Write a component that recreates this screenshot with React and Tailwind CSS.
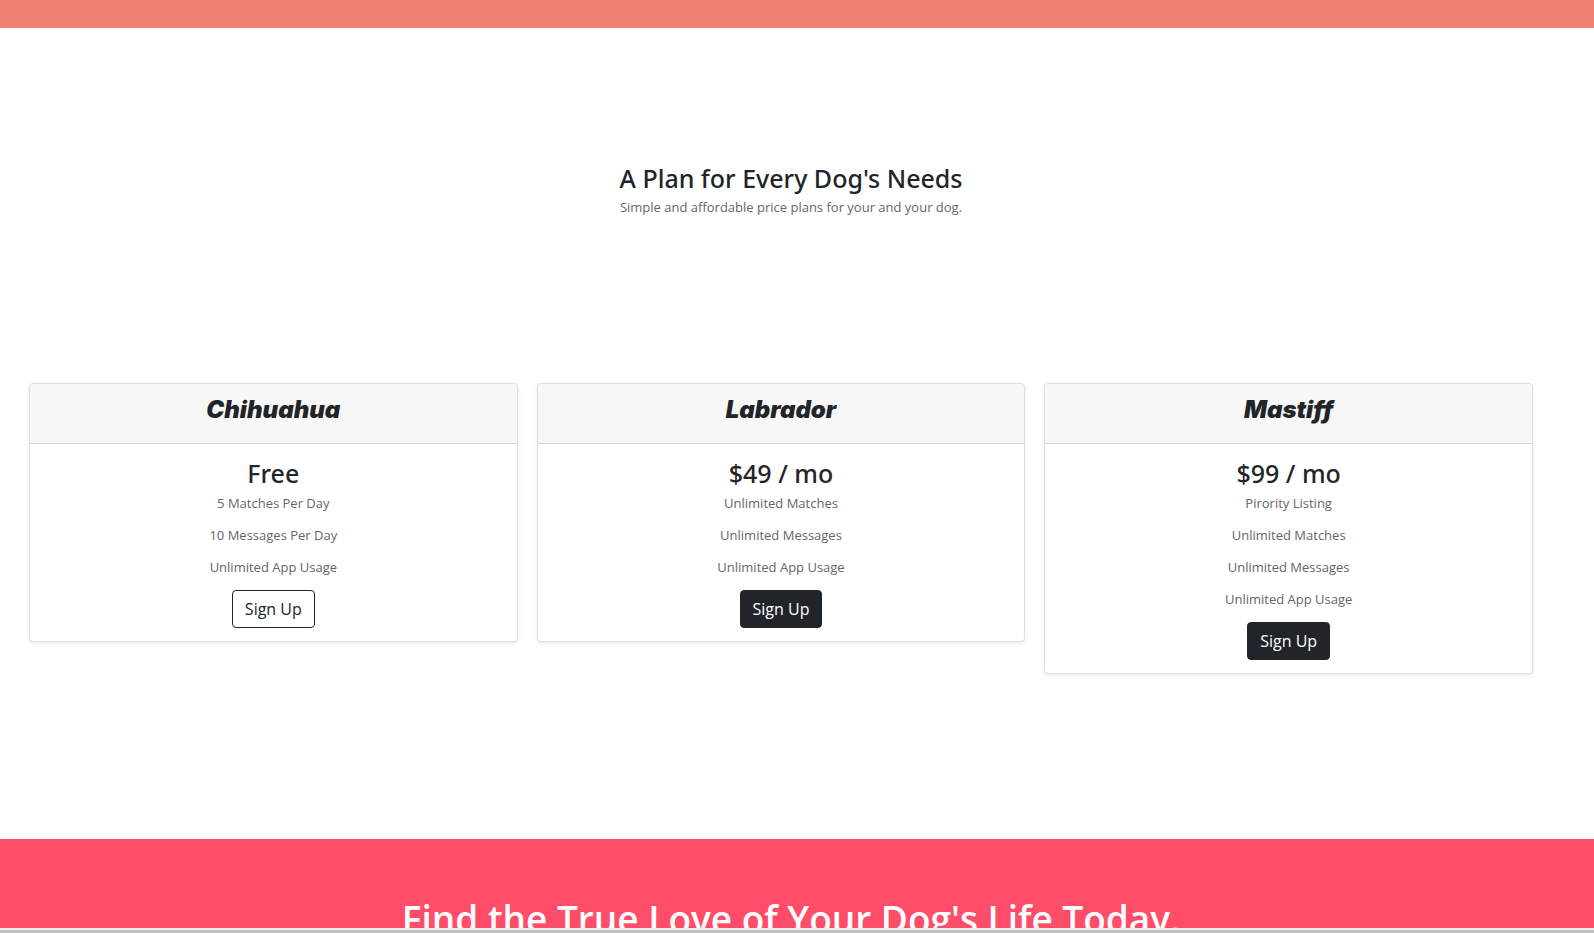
const plans = [
  {
    name: "Chihuahua",
    price: "Free",
    features: ["5 Matches Per Day", "10 Messages Per Day", "Unlimited App Usage"],
    outline: true,
  },
  {
    name: "Labrador",
    price: "$49 / mo",
    features: ["Unlimited Matches", "Unlimited Messages", "Unlimited App Usage"],
  },
  {
    name: "Mastiff",
    price: "$99 / mo",
    features: ["Pirority Listing", "Unlimited Matches", "Unlimited Messages", "Unlimited App Usage"],
  },
];

function PlanCard({ plan }) {
  return (
    <article className="rounded border border-[#dfdfdf] bg-white text-center shadow-[0_2px_4px_rgba(0,0,0,0.075)]">
      <header className="h-[60px] rounded-t border-b border-[#d8d8d8] bg-[#f7f7f7] pt-[11px]">
        <h2 className="font-['Inter',sans-serif] text-2xl leading-[30px] font-black italic">{plan.name}</h2>
      </header>
      <div className="px-4 pt-[15px] pb-[13px]">
        <h3 className="font-['Noto_Sans',sans-serif] text-[25px] leading-7 font-medium">{plan.price}</h3>
        <ul className="mb-[7px] text-[13px] leading-8 text-[#666666]">
          {plan.features.map((feature) => (
            <li key={feature}>{feature}</li>
          ))}
        </ul>
        <button
          type="button"
          className={
            plan.outline
              ? "h-[38px] rounded border border-[#212529] bg-white px-3 text-base"
              : "h-[38px] rounded border border-[#212529] bg-[#212529] px-3 text-base text-white"
          }
        >
          Sign Up
        </button>
      </div>
    </article>
  );
}

export default function App() {
  return (
    <div className="flex h-screen flex-col overflow-hidden bg-white font-['Open_Sans','Noto_Sans',sans-serif] text-[#212529]">
      <div className="h-7 shrink-0 bg-[#ef8172]" />
      <main className="shrink-0 pb-[165px]">
        <div className="pt-[136px] pr-3 pb-[160px] text-center">
          <h1 className="font-['Noto_Sans',sans-serif] text-[25px] leading-7 font-medium">A Plan for Every Dog's Needs</h1>
          <p className="text-[13px] leading-[31px] text-[#666666]">Simple and affordable price plans for your and your dog.</p>
        </div>
        <div className="grid grid-cols-3 items-start gap-[19px] pr-[61px] pl-[29px]">
          {plans.map((plan) => (
            <PlanCard key={plan.name} plan={plan} />
          ))}
        </div>
      </main>
      <section className="min-h-0 flex-1 overflow-hidden bg-[#ff4c68] pt-[54px] pr-3 text-center">
        <h2 className="text-[37px] leading-[52px] font-semibold text-white">Find the True Love of Your Dog's Life Today.</h2>
      </section>
      <div className="h-[5px] shrink-0 border-t-2 border-[#f1f1f1] bg-[#c1c1c1]" />
    </div>
  );
}
